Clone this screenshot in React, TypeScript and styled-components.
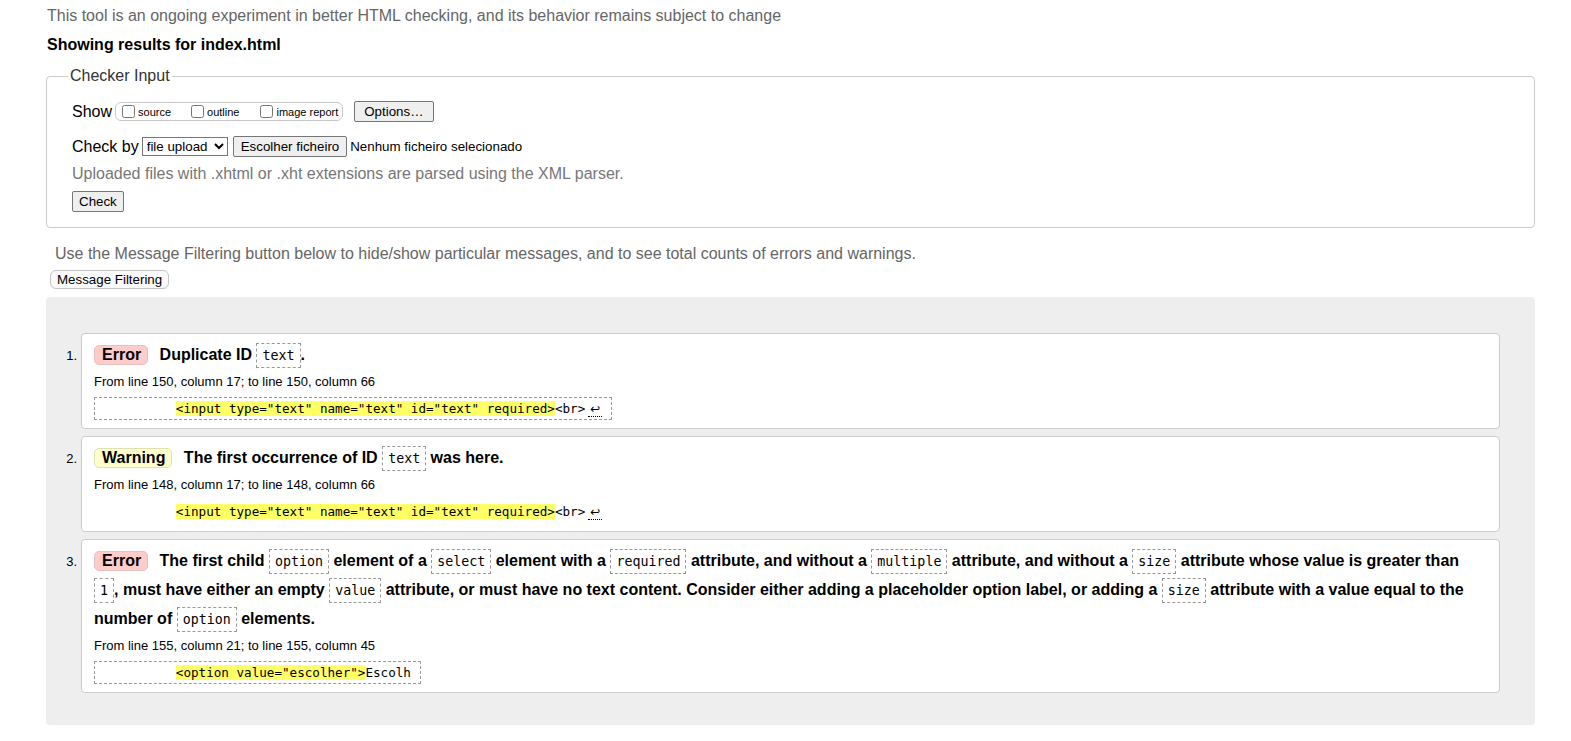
import React from 'react';
import styled, { createGlobalStyle } from 'styled-components';

const Global = createGlobalStyle`
  html, body { margin: 0; padding: 0; background: #fff; }
  body {
    font-family: "Liberation Sans", Arial, sans-serif;
    color: #000;
    font-size: 16px;
  }
`;

const Page = styled.div`
  padding: 7px 36px 18px 46px;
`;

const Intro = styled.p`
  margin: 0 0 0 1px;
  color: #666;
  line-height: 18px;
`;

const Heading = styled.h2`
  margin: 11px 0 0 1px;
  font-size: 16px;
  font-weight: bold;
  line-height: 18px;
`;

const Fieldset = styled.fieldset`
  margin: 13px 0 0 0;
  border: 1px solid #ccc;
  border-radius: 4px;
  padding: 0 24px 15px 25px;
  min-width: 0;
`;

const Legend = styled.legend`
  margin-left: -4px;
  padding: 0 2px;
  color: #333;
  line-height: 18px;
  font-size: 16px;
`;

const Row = styled.div<{ $mt: number }>`
  display: flex;
  align-items: center;
  margin-top: ${p => p.$mt}px;
  line-height: 18px;
`;

const Label = styled.span`
  margin-right: 3px;
`;

const Group = styled.span`
  display: inline-flex;
  align-items: center;
  height: 17px;
  border: 1px solid #c8c8c8;
  border-radius: 6px;
  padding: 0 4px 0 2px;
  margin-right: 11px;
`;

const Check = styled.input.attrs({ type: 'checkbox' })`
  width: 13px;
  height: 13px;
  margin: 0 3px 0 4px;
`;

const SmallLabel = styled.label<{ $mr?: number }>`
  font-size: 11px;
  margin-right: ${p => p.$mr ?? 0}px;
  line-height: 13px;
  padding-top: 2px;
`;

const Button = styled.button<{ $px?: number }>`
  font-family: "Liberation Sans", Arial, sans-serif;
  font-size: 13.33px;
  line-height: 15px;
  color: #000;
  background: #efefef;
  border: 1px solid #767676;
  border-radius: 2px;
  padding: 2px ${p => p.$px ?? 6}px;
  margin: 0;
`;

const Select = styled.select`
  font-family: "Liberation Sans", Arial, sans-serif;
  font-size: 13.33px;
  color: #000;
  height: 19px;
  width: 86px;
  border: 1px solid #767676;
  border-radius: 0;
  background: #fff;
  padding: 0;
  margin: 0 5px 0 3px;
`;

const FileName = styled.span`
  font-size: 13.33px;
  margin-left: 3px;
`;

const Hint = styled.p`
  margin: 8px 0 0 0;
  color: #777;
  line-height: 18px;
`;

const Note = styled.p`
  margin: 17px 0 0 9px;
  color: #666;
  line-height: 18px;
`;

const FilterButton = styled.button`
  display: block;
  font-family: "Liberation Sans", Arial, sans-serif;
  font-size: 13.33px;
  line-height: 15px;
  color: #000;
  background: #fafafa;
  border: 1px solid #c4c4c4;
  border-radius: 6px;
  padding: 1px 6px;
  margin: 7px 0 0 4px;
`;

const Panel = styled.div`
  margin-top: 8px;
  background: #eee;
  border-radius: 4px;
  padding: 36px 35px 32px 16px;
`;

const List = styled.ol`
  list-style: none;
  margin: 0;
  padding: 0;
  display: flex;
  flex-direction: column;
  gap: 7px;
`;

const Item = styled.li`
  display: grid;
  grid-template-columns: 19px 1fr;
`;

const Num = styled.span`
  font-size: 13px;
  line-height: 15px;
  padding-top: 15px;
  text-align: right;
  padding-right: 4px;
`;

const Card = styled.div`
  background: #fff;
  border: 1px solid #ccc;
  border-radius: 4px;
  padding: 6px 12px 8px 12px;
`;

const Title = styled.p`
  margin: 0;
  font-weight: bold;
  line-height: 29px;
`;

const Badge = styled.strong<{ $kind: 'error' | 'warning' }>`
  display: inline-block;
  line-height: 18px;
  padding: 0 6px 0 7px;
  margin-right: 7px;
  border: 1px solid;
  border-color: ${p => (p.$kind === 'error' ? '#e8c0c0' : '#e0e0b0')};
  background: ${p => (p.$kind === 'error' ? '#fcc' : '#ffc')};
  border-radius: 5px;
`;

const Code = styled.code`
  font-family: "DejaVu Sans Mono", "Liberation Mono", monospace;
  font-weight: normal;
  font-size: 13.3px;
  line-height: 16px;
  border: 1px dashed #999;
  padding: 4px 5px;
`;

const Location = styled.p`
  margin: 5px 0 0 0;
  font-size: 13px;
  line-height: 15px;
`;

const Extract = styled.code<{ $boxed: boolean }>`
  display: inline-block;
  margin-top: 8px;
  font-family: "DejaVu Sans Mono", "Liberation Mono", monospace;
  font-size: 12.6px;
  line-height: 17px;
  white-space: pre;
  border: 1px dashed ${p => (p.$boxed ? '#999' : 'transparent')};
  padding: 2px 9px 2px 5px;
`;

const Mark = styled.b`
  font-weight: normal;
  background: #ff6;
`;

const Lf = styled.span`
  display: inline-block;
  width: 14px;
  text-align: center;
  font-family: "DejaVu Sans", sans-serif;
  font-size: 12px;
  line-height: 14px;
  border-bottom: 1px dotted #000;
  margin-left: 3px;
`;

const Block = styled.div``;

const indent = '          ';

export default function App() {
  return (
    <>
      <Global />
      <Page>
        <Intro>This tool is an ongoing experiment in better HTML checking, and its behavior remains subject to change</Intro>
        <Heading>Showing results for index.html</Heading>
        <Fieldset>
          <Legend>Checker Input</Legend>
          <Row $mt={16}>
            <Label>Show</Label>
            <Group>
              <Check id="ss" />
              <SmallLabel htmlFor="ss" $mr={16}>source</SmallLabel>
              <Check id="so" />
              <SmallLabel htmlFor="so" $mr={17}>outline</SmallLabel>
              <Check id="sr" />
              <SmallLabel htmlFor="sr">image report</SmallLabel>
            </Group>
            <Button $px={9}>Options…</Button>
          </Row>
          <Row $mt={14}>
            <span>Check by</span>
            <Select defaultValue="file">
              <option value="file">file upload</option>
            </Select>
            <Button $px={7}>Escolher ficheiro</Button>
            <FileName>Nenhum ficheiro selecionado</FileName>
          </Row>
          <Hint>Uploaded files with .xhtml or .xht extensions are parsed using the XML parser.</Hint>
          <Row $mt={8}>
            <Button>Check</Button>
          </Row>
        </Fieldset>
        <Note>Use the Message Filtering button below to hide/show particular messages, and to see total counts of errors and warnings.</Note>
        <FilterButton>Message Filtering</FilterButton>
        <Panel>
          <List>
            <Item>
              <Num>1.</Num>
              <Card>
                <Title>
                  <Badge $kind="error">Error</Badge> Duplicate ID <Code>text</Code>.
                </Title>
                <Location>From line 150, column 17; to line 150, column 66</Location>
                <Block>
                  <Extract $boxed>
                    {indent}
                    <Mark>{'<input type="text" name="text" id="text" required>'}</Mark>
                    {'<br>'}
                    <Lf>↩</Lf>
                  </Extract>
                </Block>
              </Card>
            </Item>
            <Item>
              <Num>2.</Num>
              <Card>
                <Title>
                  <Badge $kind="warning">Warning</Badge> The first occurrence of ID <Code>text</Code> was here.
                </Title>
                <Location>From line 148, column 17; to line 148, column 66</Location>
                <Block>
                  <Extract $boxed={false}>
                    {indent}
                    <Mark>{'<input type="text" name="text" id="text" required>'}</Mark>
                    {'<br>'}
                    <Lf>↩</Lf>
                  </Extract>
                </Block>
              </Card>
            </Item>
            <Item>
              <Num>3.</Num>
              <Card>
                <Title>
                  <Badge $kind="error">Error</Badge> The first child <Code>option</Code> element of a <Code>select</Code> element
                  with a <Code>required</Code> attribute, and without a <Code>multiple</Code> attribute, and without a{' '}
                  <Code>size</Code> attribute whose value is greater than <Code>1</Code>, must have either an empty{' '}
                  <Code>value</Code> attribute, or must have no text content. Consider either adding a placeholder option
                  label, or adding a <Code>size</Code> attribute with a value equal to the number of <Code>option</Code> elements.
                </Title>
                <Location>From line 155, column 21; to line 155, column 45</Location>
                <Block>
                  <Extract $boxed>
                    {indent}
                    <Mark>{'<option value="escolher">'}</Mark>
                    {'Escolh'}
                  </Extract>
                </Block>
              </Card>
            </Item>
          </List>
        </Panel>
      </Page>
    </>
  );
}
